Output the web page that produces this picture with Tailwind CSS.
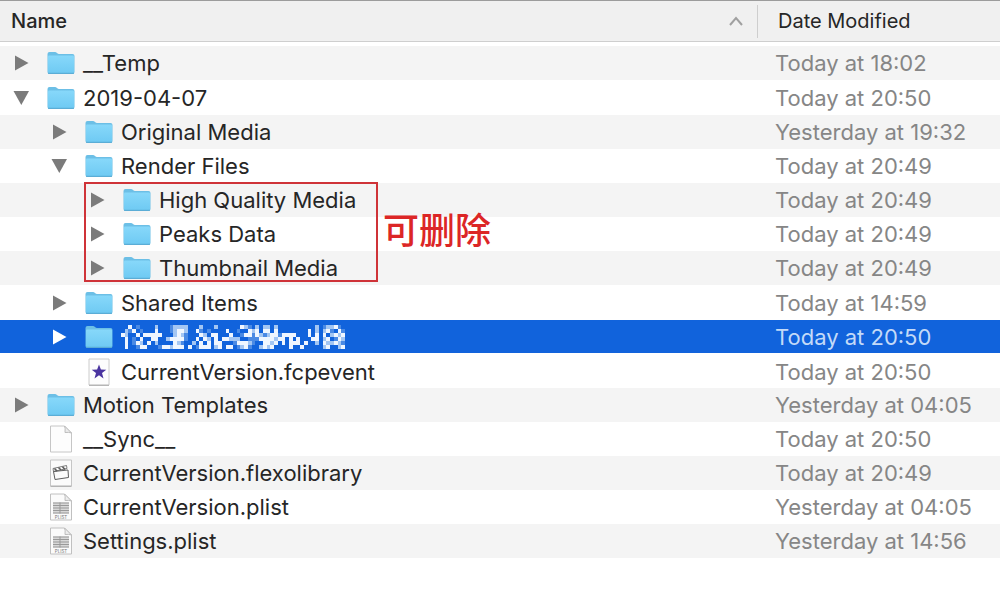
<!DOCTYPE html>
<html lang="en">
  <head>
    <meta charset="UTF-8" />
    <meta name="viewport" content="width=device-width, initial-scale=1.0" />
    <title>Finder</title>
    <script src="https://cdn.jsdelivr.net/npm/@tailwindcss/browser@4"></script>
  </head>
  <body class="bg-white font-[Inter,'Noto_Sans_CJK_SC',sans-serif] text-[22px] leading-7 text-[#262626]">
    <!-- Gradient stays outside the hidden svg, otherwise it is not painted -->
    <svg class="absolute size-0">
      <linearGradient id="folderFill" x1="0" y1="0" x2="0" y2="1">
        <stop offset="0" stop-color="#87d8fa" />
        <stop offset="1" stop-color="#6fcaf3" />
      </linearGradient>
    </svg>

    <!-- Icons -->
    <svg class="hidden">
      <symbol id="right" viewBox="0 0 16 16"><path d="M2 .5 15.500 8 2 15.500z" fill="currentColor" /></symbol>
      <symbol id="down" viewBox="0 0 16 16"><path d="M.5 1H16L8.300 15z" fill="currentColor" /></symbol>
      <symbol id="folder" viewBox="0 0 28 24">
        <path d="M.5 3Q.5 1 2.500 1H8Q9 1 10 2T12 3H25.500Q27.500 3 27.500 5V21Q27.500 23 25.500 23H2.500Q.5 23 .5 21z" fill="#6cbfe6" />
        <path d="M1 5.500Q1 4.500 2 4.500H26Q27 4.500 27 5.500V20.500Q27 22 25.500 22H2.500Q1 22 1 20.500z" fill="url(#folderFill)" />
        <path d="M1 22.300H27" stroke="#58a9d2" />
      </symbol>
      <symbol id="file" viewBox="0 0 28 28">
        <path d="M3.500 1H17.500L24.500 8V27H3.500z" fill="#fdfdfd" stroke="#c6c6c6" />
        <path d="M17.500 1Q18.500 3 18 7.500Q22 7 24.500 8z" fill="#ececec" stroke="#bdbdbd" />
      </symbol>
      <symbol id="event" viewBox="0 0 28 28">
        <path d="M4 1H24V27H4z" fill="#fdfdfd" stroke="#cccccc" />
        <path d="M4 27.300H24" stroke="#aaaaaa" />
        <path d="M14 6.500 15.900 11.600 21.300 11.800 17 15.100 18.500 20.400 14 17.300 9.500 20.400 11 15.100 6.700 11.800 12.100 11.600z" fill="#4a34a0" />
      </symbol>
      <symbol id="library" viewBox="0 0 28 28">
        <path d="M3.500 1H24.500V27H3.500z" fill="#fbfbfb" stroke="#c6c6c6" />
        <path d="M3.500 27.300H24.500" stroke="#aaaaaa" />
        <g fill="none" stroke="#5e5e5e">
          <path d="M6.500 12.500 21 11 21.500 18.500 8 20.500z" />
          <path d="M6.500 12.500 6 9.500 19.500 6.500 20 9.500z" stroke-width=".8" />
          <path d="M7.500 9.500 10 12M11.500 8.500 14 11M15.500 7.700 18 10.500" stroke-width="1.600" />
        </g>
      </symbol>
      <symbol id="plist" viewBox="0 0 28 28">
        <path d="M3.500 1H17.500L24.500 8V27H3.500z" fill="#fbfbfb" stroke="#c0c0c0" />
        <path d="M6 9.500H22V20.500H6z" fill="#d8d8d8" />
        <path d="M6 10H22M6 12.500H22M6 15H22M6 17.500H22M6 20H22M13 9.500V20.500" stroke="#999999" />
        <path d="M17.500 1Q18.500 3 18 7.500Q22 7 24.500 8z" fill="#eeeeee" stroke="#bdbdbd" />
        <text x="14" y="25.500" font-size="4.500" text-anchor="middle" fill="#777777">PLIST</text>
      </symbol>
    </svg>

    <!-- File list -->
    <table class="w-full table-fixed border-collapse text-left">
      <thead class="border-t border-b border-t-[#9c9c9c] border-b-[#cecece] bg-[#f0f0f0]">
        <tr class="h-[41px]">
          <th class="p-0 font-medium">
            <button class="flex w-full items-center justify-between pr-3.5 pl-[11px] text-[20px]">
              Name
              <svg class="h-3.5 w-3.5" viewBox="0 0 14 14"><path d="M1 11 7 4 13 11" fill="none" stroke="#a0a0a0" stroke-width="2" /></svg>
            </button>
          </th>
          <th class="w-[243px] p-0 font-normal">
            <button class="flex h-[33px] w-full items-center border-l border-[#cecece] pl-5 text-[20px]">Date Modified</button>
          </th>
        </tr>
      </thead>
      <tbody class="before:block before:h-1">
        <tr class="h-[34px] bg-[#f4f4f4]">
          <td class="p-0"><div class="flex items-center pl-[13px]">
            <button class="mr-[18px] text-[#7b7b7b]" aria-label="Expand"><svg class="size-4"><use href="#right" /></svg></button>
            <svg class="mr-2 h-6 w-7"><use href="#folder" /></svg>__Temp
          </div></td>
          <td class="p-0 pl-[18px] text-[#868686]">Today at 18:02</td>
        </tr>
        <tr class="h-[35px]">
          <td class="p-0"><div class="flex items-center pl-[13px]">
            <button class="mr-[18px] text-[#7b7b7b]" aria-label="Collapse"><svg class="size-4"><use href="#down" /></svg></button>
            <svg class="mr-2 h-6 w-7"><use href="#folder" /></svg>2019-04-07
          </div></td>
          <td class="p-0 pl-[18px] text-[#868686]">Today at 20:50</td>
        </tr>
        <tr class="h-[34px] bg-[#f4f4f4]">
          <td class="p-0"><div class="flex items-center pl-[51px]">
            <button class="mr-[18px] text-[#7b7b7b]" aria-label="Expand"><svg class="size-4"><use href="#right" /></svg></button>
            <svg class="mr-2 h-6 w-7"><use href="#folder" /></svg>Original Media
          </div></td>
          <td class="p-0 pl-[18px] text-[#868686]">Yesterday at 19:32</td>
        </tr>
        <tr class="h-[34px]">
          <td class="p-0"><div class="flex items-center pl-[51px]">
            <button class="mr-[18px] text-[#7b7b7b]" aria-label="Collapse"><svg class="size-4"><use href="#down" /></svg></button>
            <svg class="mr-2 h-6 w-7"><use href="#folder" /></svg>Render Files
          </div></td>
          <td class="p-0 pl-[18px] text-[#868686]">Today at 20:49</td>
        </tr>
        <tr class="h-[34px] bg-[#f4f4f4]">
          <td class="relative p-0"><div class="flex items-center pl-[89px]">
            <button class="mr-[18px] text-[#7b7b7b]" aria-label="Expand"><svg class="size-4"><use href="#right" /></svg></button>
            <svg class="mr-2 h-6 w-7"><use href="#folder" /></svg>High Quality Media
          </div>
          <!-- Annotation around the three render folders -->
          <div class="pointer-events-none absolute -top-px left-[84px] flex h-[100px] items-center">
            <div class="h-full w-[294px] border-2 border-[#cf3338]"></div>
            <span class="mb-2 ml-[5px] font-['Noto_Sans_CJK_SC',sans-serif] text-[36px] leading-9 font-medium whitespace-nowrap text-[#dc2626]">可删除</span>
          </div></td>
          <td class="p-0 pl-[18px] text-[#868686]">Today at 20:49</td>
        </tr>
        <tr class="h-[34px]">
          <td class="p-0"><div class="flex items-center pl-[89px]">
            <button class="mr-[18px] text-[#7b7b7b]" aria-label="Expand"><svg class="size-4"><use href="#right" /></svg></button>
            <svg class="mr-2 h-6 w-7"><use href="#folder" /></svg>Peaks Data
          </div></td>
          <td class="p-0 pl-[18px] text-[#868686]">Today at 20:49</td>
        </tr>
        <tr class="h-[34px] bg-[#f4f4f4]">
          <td class="p-0"><div class="flex items-center pl-[89px]">
            <button class="mr-[18px] text-[#7b7b7b]" aria-label="Expand"><svg class="size-4"><use href="#right" /></svg></button>
            <svg class="mr-2 h-6 w-7"><use href="#folder" /></svg>Thumbnail Media
          </div></td>
          <td class="p-0 pl-[18px] text-[#868686]">Today at 20:49</td>
        </tr>
        <tr class="h-[35px]">
          <td class="p-0"><div class="flex items-center pl-[51px]">
            <button class="mr-[18px] text-[#7b7b7b]" aria-label="Expand"><svg class="size-4"><use href="#right" /></svg></button>
            <svg class="mr-2 h-6 w-7"><use href="#folder" /></svg>Shared Items
          </div></td>
          <td class="p-0 pl-[18px] text-[#868686]">Today at 14:59</td>
        </tr>
        <tr class="h-[34px] border-b-2 border-white bg-[#1163dc] text-white">
          <td class="p-0"><div class="flex items-center pl-[51px]">
            <button class="mr-[18px]" aria-label="Expand"><svg class="size-4"><use href="#right" /></svg></button>
            <svg class="mr-2 h-6 w-7"><use href="#folder" /></svg>
            <svg id="hiddenName" class="h-6 w-56" viewBox="0 0 60 6" preserveAspectRatio="none" shape-rendering="crispEdges"></svg>
          </div></td>
          <td class="p-0 pl-[18px] text-[#c3daf8]">Today at 20:50</td>
        </tr>
        <tr class="h-[34px]">
          <td class="p-0"><div class="flex items-center pl-[85px]">
            <svg class="mr-2 size-7"><use href="#event" /></svg>CurrentVersion.fcpevent
          </div></td>
          <td class="p-0 pl-[18px] text-[#868686]">Today at 20:50</td>
        </tr>
        <tr class="h-[34px] bg-[#f4f4f4]">
          <td class="p-0"><div class="flex items-center pl-[13px]">
            <button class="mr-[18px] text-[#7b7b7b]" aria-label="Expand"><svg class="size-4"><use href="#right" /></svg></button>
            <svg class="mr-2 h-6 w-7"><use href="#folder" /></svg>Motion Templates
          </div></td>
          <td class="p-0 pl-[18px] text-[#868686]">Yesterday at 04:05</td>
        </tr>
        <tr class="h-[34px]">
          <td class="p-0"><div class="flex items-center pl-[47px]">
            <svg class="mr-2 size-7"><use href="#file" /></svg>__Sync__
          </div></td>
          <td class="p-0 pl-[18px] text-[#868686]">Today at 20:50</td>
        </tr>
        <tr class="h-[34px] bg-[#f4f4f4]">
          <td class="p-0"><div class="flex items-center pl-[47px]">
            <svg class="mr-2 size-7"><use href="#library" /></svg>CurrentVersion.flexolibrary
          </div></td>
          <td class="p-0 pl-[18px] text-[#868686]">Today at 20:49</td>
        </tr>
        <tr class="h-[34px]">
          <td class="p-0"><div class="flex items-center pl-[47px]">
            <svg class="mr-2 size-7"><use href="#plist" /></svg>CurrentVersion.plist
          </div></td>
          <td class="p-0 pl-[18px] text-[#868686]">Yesterday at 04:05</td>
        </tr>
        <tr class="h-[34px] bg-[#f4f4f4]">
          <td class="p-0"><div class="flex items-center pl-[47px]">
            <svg class="mr-2 size-7"><use href="#plist" /></svg>Settings.plist
          </div></td>
          <td class="p-0 pl-[18px] text-[#868686]">Yesterday at 14:56</td>
        </tr>
      </tbody>
    </table>

    <script>
      // Mosaic over the private folder name, 0 = background, 3 = white
      const mosaic = [
        "003010000200012222000200020000003210202202000000000020122310",
        "021301000300012332003101000030010032303303000000003020231031",
        "320030333330002321000320330003001331321233133330003030302323",
        "030103003300233331003032030332220011133332330303000330230132",
        "030132030200003210020303033000133321003323030333030020322321",
        "030013300013323330301333023033012310023230000300300000230023",
      ];
      const shades = ["", "#4a8ae4", "#a3c6f3", "#eff6ff"];
      document.getElementById("hiddenName").innerHTML = mosaic
        .map((row, y) =>
          [...row]
            .map((s, x) => (s === "0" ? "" : `<rect x="${x}" y="${y}" width="1" height="1" fill="${shades[s]}" />`))
            .join("")
        )
        .join("");
    </script>
  </body>
</html>
